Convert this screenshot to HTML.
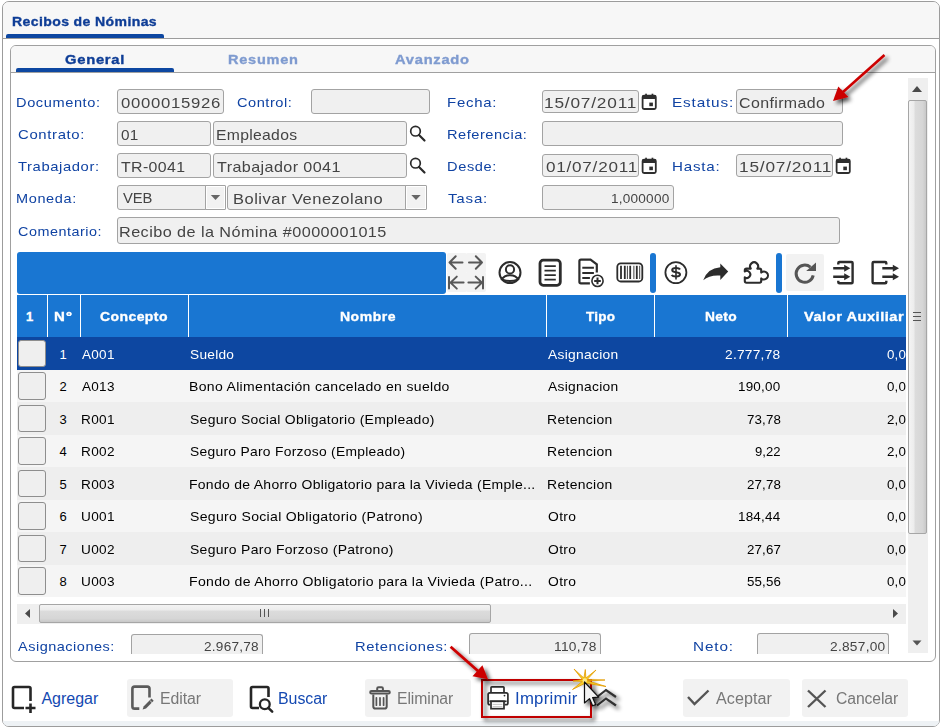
<!DOCTYPE html>
<html><head><meta charset="utf-8"><title>Recibos de Nóminas</title>
<style>
html,body{margin:0;padding:0;background:#fff;}
#root{position:relative;width:943px;height:727px;overflow:hidden;background:#fff;font-family:"Liberation Sans", sans-serif;}
.a{position:absolute;box-sizing:border-box;}
.t{position:absolute;white-space:nowrap;line-height:20px;transform-origin:0 0;font-family:"Liberation Sans", sans-serif;}
.inp{position:absolute;box-sizing:border-box;background:#f0f0f0;border:1px solid #a3a3a3;border-radius:3px;}
.row{position:absolute;left:17px;width:889px;}
.cb{position:absolute;left:18px;width:28px;box-sizing:border-box;background:#efefef;border:1px solid #8e8e8e;border-radius:3px;}
svg{position:absolute;overflow:visible;}
</style></head>
<body><div id="root">
<!-- outer window -->
<div class="a" style="left:2px;top:1px;width:938px;height:726px;border:1px solid #9c9c9c;border-radius:7px;background:#fff;"></div>
<div class="a" style="left:3px;top:2px;width:936px;height:36px;background:#f7f7f7;border-radius:6px 6px 0 0;"></div>
<div class="a" style="left:3px;top:38px;width:936px;height:1px;background:#9c9c9c;"></div>
<div class="a" style="left:6px;top:34px;width:158px;height:4px;background:#0d47a1;border-radius:2px 2px 0 0;"></div>
<div class="a" style="left:3px;top:721px;width:936px;height:5px;background:#eef2f5;border-radius:0 0 6px 6px;"></div>
<!-- inner panel -->
<div class="a" style="left:10px;top:45px;width:926px;height:617px;border:1px solid #a0a0a0;border-radius:6px;background:#fff;"></div>
<div class="a" style="left:11px;top:46px;width:924px;height:26px;background:#f7f7f7;border-radius:5px 5px 0 0;"></div>
<div class="a" style="left:11px;top:72px;width:924px;height:1px;background:#a0a0a0;"></div>
<div class="a" style="left:16px;top:68px;width:158px;height:4px;background:#0d47a1;border-radius:2px 2px 0 0;"></div>
<!-- vertical scrollbar -->
<div class="a" style="left:908px;top:78px;width:20px;height:575px;background:#efefef;"></div>
<div class="a" style="left:908px;top:100px;width:19px;height:434px;border:1px solid #a6a6a6;border-radius:2px;background:linear-gradient(to right,#f4f4f4 0%,#ececec 30%,#dcdcdc 35%,#d6d6d6 80%,#c8c8c8 100%);"></div>
<svg style="left:0;top:0" width="943" height="727">
 <polygon points="912,92 922,92 917,86" fill="#4a4a4a"/>
 <polygon points="912.5,640.5 921.5,640.5 917,645.5" fill="#555"/>
 <g stroke="#555" stroke-width="1"><line x1="913" y1="312.5" x2="921" y2="312.5"/><line x1="913" y1="316.5" x2="921" y2="316.5"/><line x1="913" y1="320.5" x2="921" y2="320.5"/></g>
</svg>
<!-- form inputs -->
<div class="inp" style="left:117px;top:89px;width:107px;height:25px;"></div>
<div class="inp" style="left:311px;top:89px;width:119px;height:25px;"></div>
<div class="inp" style="left:542px;top:90px;width:97px;height:23px;"></div>
<div class="inp" style="left:736px;top:89px;width:107px;height:25px;"></div>
<div class="inp" style="left:117px;top:121px;width:94px;height:25px;"></div>
<div class="inp" style="left:213px;top:121px;width:194px;height:25px;"></div>
<div class="inp" style="left:542px;top:121px;width:301px;height:25px;"></div>
<div class="inp" style="left:117px;top:153px;width:94px;height:25px;"></div>
<div class="inp" style="left:213px;top:153px;width:194px;height:25px;"></div>
<div class="inp" style="left:542px;top:154px;width:97px;height:23px;"></div>
<div class="inp" style="left:736px;top:154px;width:97px;height:23px;"></div>
<div class="inp" style="left:117px;top:185px;width:109px;height:25px;"></div>
<div class="inp" style="left:205px;top:185px;width:21px;height:25px;border-radius:1px;background:#f2f2f2;box-shadow:inset 0 0 0 1px #fff;"></div>
<div class="inp" style="left:227px;top:185px;width:200px;height:25px;"></div>
<div class="inp" style="left:405px;top:185px;width:22px;height:25px;border-radius:1px;background:#f2f2f2;box-shadow:inset 0 0 0 1px #fff;"></div>
<div class="inp" style="left:542px;top:185px;width:132px;height:25px;"></div>
<div class="inp" style="left:117px;top:217px;width:723px;height:27px;"></div>
<svg style="left:0;top:0" width="943" height="727">
 <polygon points="210.8,195 220.2,195 215.5,200" fill="#666"/>
 <polygon points="411.3,195 420.7,195 416,200" fill="#666"/>
 <g fill="none" stroke="#2a2a2a" stroke-width="1.7">
  <circle cx="415.5" cy="131.2" r="4.8"/><line x1="419" y1="135" x2="424.5" y2="140.5" stroke-width="2.2" stroke-linecap="round"/>
  <circle cx="415.5" cy="163.2" r="4.8"/><line x1="419" y1="167" x2="424.5" y2="172.5" stroke-width="2.2" stroke-linecap="round"/>
 </g>
 <g fill="#2e2e2e">
  <rect x="642.6" y="95.6" width="13.2" height="13.4" rx="1.5" fill="none" stroke="#2e2e2e" stroke-width="1.8"/>
  <rect x="642.6" y="95.6" width="13.2" height="3.4"/>
  <rect x="645.2" y="93.7" width="1.7" height="2.5"/><rect x="651.6" y="93.7" width="1.7" height="2.5"/>
  <rect x="649.3" y="102.6" width="3.6" height="3.6"/>
 </g>
 <g fill="#2e2e2e" transform="translate(0,64)">
  <rect x="642.6" y="95.6" width="13.2" height="13.4" rx="1.5" fill="none" stroke="#2e2e2e" stroke-width="1.8"/>
  <rect x="642.6" y="95.6" width="13.2" height="3.4"/>
  <rect x="645.2" y="93.7" width="1.7" height="2.5"/><rect x="651.6" y="93.7" width="1.7" height="2.5"/>
  <rect x="649.3" y="102.6" width="3.6" height="3.6"/>
 </g>
 <g fill="#2e2e2e" transform="translate(194,64)">
  <rect x="642.6" y="95.6" width="13.2" height="13.4" rx="1.5" fill="none" stroke="#2e2e2e" stroke-width="1.8"/>
  <rect x="642.6" y="95.6" width="13.2" height="3.4"/>
  <rect x="645.2" y="93.7" width="1.7" height="2.5"/><rect x="651.6" y="93.7" width="1.7" height="2.5"/>
  <rect x="649.3" y="102.6" width="3.6" height="3.6"/>
 </g>
</svg>
<!-- toolbar -->
<div class="a" style="left:17px;top:252px;width:429px;height:42px;background:#1976d2;border-radius:3px;"></div>
<div class="a" style="left:447px;top:253px;width:20px;height:20px;background:#f3f3f3;border-radius:2px;"></div>
<div class="a" style="left:466px;top:253px;width:20px;height:20px;background:#f3f3f3;border-radius:2px;"></div>
<div class="a" style="left:447px;top:272px;width:20px;height:20px;background:#f3f3f3;border-radius:2px;"></div>
<div class="a" style="left:466px;top:272px;width:20px;height:20px;background:#f3f3f3;border-radius:2px;"></div>
<div class="a" style="left:650px;top:253px;width:6px;height:40px;background:#1976d2;border-radius:3px;"></div>
<div class="a" style="left:776px;top:253px;width:6px;height:40px;background:#1976d2;border-radius:3px;"></div>
<div class="a" style="left:786px;top:254px;width:38px;height:37px;background:#f2f2f2;border-radius:2px;"></div>
<svg style="left:0;top:0" width="943" height="727">
 <g fill="none" stroke="#585858" stroke-width="2" stroke-linecap="round" stroke-linejoin="round">
  <path d="M449.5 262.5 H462.5 M455.7 256.3 L449.5 262.5 L455.7 268.7"/>
  <path d="M469 262.5 H482 M475.8 256.3 L482 262.5 L475.8 268.7"/>
  <path d="M449 277 V288.6 M450 282.6 H463.6 M456.8 276.6 L450.5 282.6 L456.8 288.6"/>
  <path d="M483 277 V288.6 M468.4 282.6 H482 M475.7 276.6 L482 282.6 L475.7 288.6"/>
 </g>
 <g fill="none" stroke="#2c2c2c" stroke-width="2">
  <circle cx="510" cy="272.6" r="10.5"/>
  <circle cx="510" cy="269.4" r="4.1"/>
  <path d="M501.3 280 Q504 275.2 510 275.2 Q516 275.2 518.7 280"/>
  <path d="M502.3 279.6 Q506 281 510 281 Q514 281 517.7 279.6"/>
 </g>
 <g fill="none" stroke="#2c2c2c">
  <rect x="540" y="260.2" width="20.3" height="25.1" rx="3.2" stroke-width="2.8"/>
  <path d="M544.5 266.1 H555.8 M544.5 270.6 H555.8 M544.5 275.1 H555.8 M544.5 279.6 H555.8" stroke-width="1.7"/>
 </g>
 <g fill="none" stroke="#2c2c2c" stroke-width="2.2">
  <path d="M589.9 283.4 H581 Q579.4 283.4 579.4 281.8 V261.2 Q579.4 259.6 581 259.6 H590.5 L596.8 264.4 V272.5"/>
  <path d="M582.3 267.7 H593.9 M582.3 272.9 H593.9 M582.3 278.1 H589.9" stroke-width="2"/>
  <circle cx="597.5" cy="280.9" r="5.6" stroke-width="1.6" fill="#fff"/>
  <path d="M594.2 280.9 H600.8 M597.5 277.6 V284.2" stroke-width="2"/>
 </g>
 <g fill="none" stroke="#2c2c2c">
  <rect x="617.3" y="263.3" width="25" height="18.2" rx="3.5" stroke-width="1.8"/>
  <path d="M621 265.8 V279 M624.8 265.8 V279 M630.2 265.8 V279 M636.8 265.8 V279" stroke-width="1.8"/>
  <path d="M627.4 265.8 V279 M639.7 265.8 V279" stroke-width="0.9"/>
  <path d="M633.8 265.8 V279" stroke="#888" stroke-width="1.6"/>
 </g>
 <g fill="none" stroke="#2c2c2c" stroke-width="1.8">
  <circle cx="675.9" cy="272.6" r="10.5"/>
  <path d="M680 269.5 Q679.2 267.9 676 267.9 Q672.2 267.9 672.2 270 Q672.2 271.9 676 272.2 Q680 272.6 680 274.6 Q680 276.6 676 276.6 Q672.6 276.6 671.6 275" stroke-width="2"/>
  <path d="M676 265.2 V279.6" stroke-width="1.6"/>
 </g>
 <path d="M703.2 280.3 Q707.5 268.2 720.3 267.3 V263.6 L728.2 271.5 L720.3 279.9 V275.6 Q709.5 274.8 703.2 280.3 Z" fill="#2c2c2c"/>
 <g fill="none" stroke="#2c2c2c" stroke-width="2.1" stroke-linejoin="round">
  <path d="M746.5 268.6 H750.8 A4 4 0 1 1 757.4 268.6 H759.5 Q761.2 268.6 761.2 270.3 V272.6 A4 4 0 1 1 761.2 278.4 V281 Q761.2 282.7 759.5 282.7 H746.5 Q744.8 282.7 744.8 281 V277.3 A3.5 3.5 0 1 0 744.8 271.5 V270.3 Q744.8 268.6 746.5 268.6 Z"/>
 </g>
 <path d="M810.4 267.2 A8.6 8.6 0 1 0 813.2 275.4" fill="none" stroke="#555" stroke-width="3"/>
 <polygon points="806.2,271 816,262.6 816,271" fill="#555"/>
 <g fill="none" stroke="#2c2c2c" stroke-width="2.4" stroke-linejoin="round">
  <path d="M838.3 264.5 V263 Q838.3 262 839.5 262 H851.5 Q852.6 262 852.6 263 V282.2 Q852.6 283.3 851.5 283.3 H839.5 Q838.3 283.3 838.3 282.2 V280.8"/>
  <path d="M833.2 268.3 H845.5 M833.2 276.8 H845.5"/>
 </g>
 <polygon points="844.2,264.8 850.3,268.3 844.2,271.8" fill="#2c2c2c"/>
 <polygon points="844.2,273.3 850.3,276.8 844.2,280.3" fill="#2c2c2c"/>
 <g fill="none" stroke="#2c2c2c" stroke-width="2.4" stroke-linejoin="round">
  <path d="M886.3 264.5 V263 Q886.3 262 885.2 262 H873.8 Q872.6 262 872.6 263 V282.2 Q872.6 283.3 873.8 283.3 H885.2 Q886.3 283.3 886.3 282.2 V280.8"/>
  <path d="M882.3 268.3 H893 M882.3 276.8 H893"/>
 </g>
 <polygon points="892.8,264.8 899,268.3 892.8,271.8" fill="#2c2c2c"/>
 <polygon points="892.8,273.3 899,276.8 892.8,280.3" fill="#2c2c2c"/>
</svg>
<!-- grid -->
<div class="a" style="left:17px;top:295px;width:889px;height:42px;background:#1976d2;"></div>
<div class="a" style="left:47px;top:295px;width:1px;height:42px;background:#fff;"></div>
<div class="a" style="left:80px;top:295px;width:1px;height:42px;background:#fff;"></div>
<div class="a" style="left:188px;top:295px;width:1px;height:42px;background:#fff;"></div>
<div class="a" style="left:546px;top:295px;width:1px;height:42px;background:#fff;"></div>
<div class="a" style="left:654px;top:295px;width:1px;height:42px;background:#fff;"></div>
<div class="a" style="left:787px;top:295px;width:1px;height:42px;background:#fff;"></div>
<div class="row" style="top:337px;height:33px;background:#0d47a1;"></div>
<div class="row" style="top:370px;height:32px;background:#f5f5f5;"></div>
<div class="row" style="top:402px;height:33px;background:#eeeeee;"></div>
<div class="row" style="top:435px;height:32px;background:#f5f5f5;"></div>
<div class="row" style="top:467px;height:33px;background:#eeeeee;"></div>
<div class="row" style="top:500px;height:32px;background:#f5f5f5;"></div>
<div class="row" style="top:532px;height:33px;background:#eeeeee;"></div>
<div class="row" style="top:565px;height:32px;background:#f5f5f5;"></div>
<div class="cb" style="top:340px;height:27px;"></div>
<div class="cb" style="top:372px;height:28px;"></div>
<div class="cb" style="top:405px;height:27px;"></div>
<div class="cb" style="top:437px;height:28px;"></div>
<div class="cb" style="top:470px;height:27px;"></div>
<div class="cb" style="top:502px;height:28px;"></div>
<div class="cb" style="top:535px;height:27px;"></div>
<div class="cb" style="top:567px;height:28px;"></div>
<!-- horizontal scrollbar -->
<div class="a" style="left:17px;top:604px;width:889px;height:20px;background:#efefef;"></div>
<div class="a" style="left:39px;top:604px;width:452px;height:19px;border:1px solid #a6a6a6;border-radius:2px;background:linear-gradient(to bottom,#f4f4f4 0%,#ececec 30%,#dcdcdc 35%,#d6d6d6 80%,#c8c8c8 100%);"></div>
<svg style="left:0;top:0" width="943" height="727">
 <polygon points="30,609 30,618 25,613.5" fill="#4a4a4a"/>
 <polygon points="893,609 893,618 898,613.5" fill="#4a4a4a"/>
 <g stroke="#555" stroke-width="1"><line x1="260.5" y1="609" x2="260.5" y2="617"/><line x1="264.5" y1="609" x2="264.5" y2="617"/><line x1="268.5" y1="609" x2="268.5" y2="617"/></g>
</svg>
<!-- totals -->
<div class="inp" style="left:131px;top:634px;width:132px;height:20px;border-bottom:none;border-radius:3px 3px 0 0;"></div>
<div class="inp" style="left:469px;top:633px;width:132px;height:21px;border-bottom:none;border-radius:3px 3px 0 0;"></div>
<div class="inp" style="left:757px;top:633px;width:132px;height:21px;border-bottom:none;border-radius:3px 3px 0 0;"></div>
<!-- bottom buttons -->
<div class="a" style="left:127px;top:679px;width:106px;height:38px;background:#f2f2f2;border-radius:3px;"></div>
<div class="a" style="left:365px;top:679px;width:106px;height:38px;background:#f2f2f2;border-radius:3px;"></div>
<div class="a" style="left:683px;top:679px;width:107px;height:38px;background:#f2f2f2;border-radius:3px;"></div>
<div class="a" style="left:802px;top:679px;width:106px;height:38px;background:#f2f2f2;border-radius:3px;"></div>
<svg style="left:0;top:0" width="943" height="727">
 <g fill="none" stroke="#262626" stroke-width="2.6">
  <path d="M24 708 H14.5 Q13 708 13 706.5 V688.5 Q13 687 14.5 687 H29 Q30.5 687 30.5 688.5 V701"/>
  <path d="M30.5 703.5 V713 M25.5 708 H35.5"/>
 </g>
 <g fill="none" stroke="#555" stroke-width="2.6">
  <path d="M139.3 708.6 H134.6 Q132.4 708.6 132.4 706.4 V688.8 Q132.4 686.6 134.6 686.6 H147.3 Q149.5 686.6 149.5 688.8 V697.5" stroke="#5a5a5a"/>
 </g>
 <polygon points="142.6,709.6 143.8,706.3 151.5,698.6 153.7,700.8 146,708.5" fill="#5a5a5a"/>
 <path d="M150.2 700.8 L152.5 703.1" stroke="#f2f2f2" stroke-width="0.9"/>
 <g>
 </g>
 <g fill="none" stroke="#262626" stroke-width="2.6">
  <path d="M259 708 H252.5 Q251 708 251 706.5 V688.5 Q251 687 252.5 687 H267 Q268.5 687 268.5 688.5 V697"/>
  <circle cx="264.8" cy="704.3" r="4.9" stroke-width="2.3"/>
  <path d="M268.3 707.8 L272.2 711.7" stroke-width="2.5" stroke-linecap="round"/>
 </g>
 <g fill="none" stroke="#555" stroke-width="2">
  <rect x="370.2" y="690.9" width="19.6" height="2.6" rx="1.3"/>
  <path d="M377.2 690.4 V688.6 Q377.2 687.3 378.5 687.3 H381.6 Q382.9 687.3 382.9 688.6 V690.4"/>
  <path d="M373.3 694.5 V706.5 Q373.3 708.6 375.4 708.6 H384.6 Q386.7 708.6 386.7 706.5 V694.5"/>
  <path d="M376.4 697.8 V705.2 M380 697.8 V705.2 M383.6 697.8 V705.2" stroke-width="1.7" stroke-linecap="round"/>
 </g>
 <g fill="none" stroke="#2c2c2c" stroke-width="1.7">
  <path d="M491 692.3 V687.6 Q491 686.8 491.8 686.8 H503.2 Q504 686.8 504 687.6 V692.3"/>
  <path d="M490.2 704.6 H489.8 Q488.1 704.6 488.1 702.9 V694.5 Q488.1 692.8 489.8 692.8 H506.2 Q507.9 692.8 507.9 694.5 V702.9 Q507.9 704.6 506.2 704.6 H504.8"/>
  <path d="M489.4 701.3 H506.6"/>
  <rect x="491" y="701.3" width="13" height="7.4" fill="#fff"/>
  <path d="M492.6 704.4 H502.4 M492.6 706.6 H502.4" stroke="#bdbdbd" stroke-width="0.9"/>
 </g>
 <circle cx="504.5" cy="695.6" r="0.9" fill="#2c2c2c"/>
 <g fill="none" stroke="#555" stroke-width="2.4">
  <path d="M688 697 L694.5 704 L708.5 690.5"/>
  <path d="M808 690.5 L825.5 707 M825.5 690.5 L808 707"/>
 </g>
</svg>
<div class="t" style="left:12.30px;top:12px;font-size:13px;color:#0e3d96;font-weight:bold;-webkit-text-stroke:0.35px #0e3d96;letter-spacing:0.366px;transform:scaleX(1.0788);">Recibos de Nóminas</div>
<div class="t" style="left:65.30px;top:50px;font-size:13px;color:#0e3d96;font-weight:bold;-webkit-text-stroke:0.35px #0e3d96;letter-spacing:0.639px;transform:scaleX(1.1368);">General</div>
<div class="t" style="left:228.00px;top:50px;font-size:13px;color:#7f9bd0;font-weight:bold;-webkit-text-stroke:0.35px #7f9bd0;letter-spacing:0.682px;transform:scaleX(1.1170);">Resumen</div>
<div class="t" style="left:394.70px;top:50px;font-size:13px;color:#7f9bd0;font-weight:bold;-webkit-text-stroke:0.35px #7f9bd0;letter-spacing:0.664px;transform:scaleX(1.1291);">Avanzado</div>
<div class="t" style="left:16.38px;top:93px;font-size:13px;color:#1043a3;letter-spacing:0.544px;transform:scaleX(1.1202);">Documento:</div>
<div class="t" style="left:236.60px;top:93px;font-size:13px;color:#1043a3;letter-spacing:0.468px;transform:scaleX(1.1228);">Control:</div>
<div class="t" style="left:447.25px;top:93px;font-size:13px;color:#1043a3;letter-spacing:0.659px;transform:scaleX(1.1490);">Fecha:</div>
<div class="t" style="left:672.02px;top:93px;font-size:13px;color:#1043a3;letter-spacing:0.700px;transform:scaleX(1.1800);">Estatus:</div>
<div class="t" style="left:17.50px;top:125px;font-size:13px;color:#1043a3;letter-spacing:0.560px;transform:scaleX(1.1457);">Contrato:</div>
<div class="t" style="left:447.28px;top:125px;font-size:13px;color:#1043a3;letter-spacing:0.472px;transform:scaleX(1.1224);">Referencia:</div>
<div class="t" style="left:17.50px;top:157px;font-size:13px;color:#1043a3;letter-spacing:0.525px;transform:scaleX(1.1369);">Trabajador:</div>
<div class="t" style="left:447.28px;top:157px;font-size:13px;color:#1043a3;letter-spacing:0.572px;transform:scaleX(1.1216);">Desde:</div>
<div class="t" style="left:672.04px;top:157px;font-size:13px;color:#1043a3;letter-spacing:0.676px;transform:scaleX(1.1642);">Hasta:</div>
<div class="t" style="left:16.38px;top:189px;font-size:13px;color:#1043a3;letter-spacing:0.563px;transform:scaleX(1.1154);">Moneda:</div>
<div class="t" style="left:448.40px;top:189px;font-size:13px;color:#1043a3;letter-spacing:0.702px;transform:scaleX(1.1603);">Tasa:</div>
<div class="t" style="left:18.00px;top:222px;font-size:13px;color:#1043a3;letter-spacing:0.452px;transform:scaleX(1.1069);">Comentario:</div>
<div class="t" style="left:120.70px;top:93px;font-size:15px;color:#444444;letter-spacing:0.635px;transform:scaleX(1.1150);">0000015926</div>
<div class="t" style="left:121.10px;top:125px;font-size:15px;color:#444444;letter-spacing:0.219px;transform:scaleX(1.0205);">01</div>
<div class="t" style="left:215.55px;top:125px;font-size:15px;color:#444444;letter-spacing:0.284px;transform:scaleX(1.0486);">Empleados</div>
<div class="t" style="left:121.10px;top:157px;font-size:15px;color:#444444;letter-spacing:0.358px;transform:scaleX(1.0588);">TR-0041</div>
<div class="t" style="left:216.60px;top:157px;font-size:15px;color:#444444;letter-spacing:0.370px;transform:scaleX(1.0765);">Trabajador 0041</div>
<div class="t" style="left:123.40px;top:188px;font-size:15px;color:#444444;letter-spacing:-0.144px;transform:scaleX(0.9858);">VEB</div>
<div class="t" style="left:232.70px;top:189px;font-size:15px;color:#444444;letter-spacing:0.452px;transform:scaleX(1.0997);">Bolivar Venezolano</div>
<div class="t" style="left:118.72px;top:222px;font-size:15px;color:#444444;letter-spacing:0.395px;transform:scaleX(1.0823);">Recibo de la Nómina #0000001015</div>
<div class="t" style="left:544.45px;top:93px;font-size:15px;color:#444444;letter-spacing:0.703px;transform:scaleX(1.1502);">15/07/2011</div>
<div class="t" style="left:739.40px;top:93px;font-size:15px;color:#444444;letter-spacing:0.347px;transform:scaleX(1.0646);">Confirmado</div>
<div class="t" style="left:545.60px;top:157px;font-size:15px;color:#444444;letter-spacing:0.670px;transform:scaleX(1.1400);">01/07/2011</div>
<div class="t" style="left:739.05px;top:157px;font-size:15px;color:#444444;letter-spacing:0.703px;transform:scaleX(1.1502);">15/07/2011</div>
<div class="t" style="left:611.00px;top:189px;font-size:13px;color:#444444;letter-spacing:0.219px;transform:scaleX(1.0445);">1,000000</div>
<div class="t" style="left:26.00px;top:307px;font-size:13px;color:#ffffff;font-weight:bold;-webkit-text-stroke:0.35px #ffffff;">1</div>
<div class="t" style="left:54.20px;top:307px;font-size:13px;color:#ffffff;font-weight:bold;-webkit-text-stroke:0.35px #ffffff;letter-spacing:1.286px;transform:scaleX(1.1548);">Nº</div>
<div class="t" style="left:99.80px;top:307px;font-size:13px;color:#ffffff;font-weight:bold;-webkit-text-stroke:0.35px #ffffff;letter-spacing:0.399px;transform:scaleX(1.0750);">Concepto</div>
<div class="t" style="left:339.50px;top:307px;font-size:13px;color:#ffffff;font-weight:bold;-webkit-text-stroke:0.35px #ffffff;letter-spacing:0.469px;transform:scaleX(1.0775);">Nombre</div>
<div class="t" style="left:585.60px;top:307px;font-size:13px;color:#ffffff;font-weight:bold;-webkit-text-stroke:0.35px #ffffff;letter-spacing:0.236px;transform:scaleX(1.0405);">Tipo</div>
<div class="t" style="left:705.00px;top:307px;font-size:13px;color:#ffffff;font-weight:bold;-webkit-text-stroke:0.35px #ffffff;letter-spacing:0.359px;transform:scaleX(1.0591);">Neto</div>
<div class="t" style="left:803.60px;top:307px;font-size:13px;color:#ffffff;font-weight:bold;-webkit-text-stroke:0.35px #ffffff;letter-spacing:0.468px;transform:scaleX(1.1233);">Valor Auxiliar</div>
<div class="t" style="left:59.50px;top:345px;font-size:13px;color:#ffffff;">1</div>
<div class="t" style="left:82.00px;top:345px;font-size:13px;color:#ffffff;letter-spacing:0.265px;transform:scaleX(1.0412);">A001</div>
<div class="t" style="left:190.00px;top:345px;font-size:13px;color:#ffffff;letter-spacing:0.263px;transform:scaleX(1.0514);">Sueldo</div>
<div class="t" style="left:548.00px;top:345px;font-size:13px;color:#ffffff;letter-spacing:0.273px;transform:scaleX(1.0619);">Asignacion</div>
<div class="t" style="left:725.42px;top:345px;font-size:13px;color:#ffffff;letter-spacing:0.244px;transform:scaleX(1.0537);">2.777,78</div>
<div class="t" style="left:886.70px;top:345px;font-size:13px;color:#ffffff;letter-spacing:0.148px;transform:scaleX(1.0255);">0,0</div>
<div class="t" style="left:59.50px;top:377px;font-size:13px;color:#000000;">2</div>
<div class="t" style="left:82.00px;top:377px;font-size:13px;color:#000000;letter-spacing:0.265px;transform:scaleX(1.0412);">A013</div>
<div class="t" style="left:188.92px;top:377px;font-size:13px;color:#000000;letter-spacing:0.307px;transform:scaleX(1.0776);">Bono Alimentación cancelado en sueldo</div>
<div class="t" style="left:548.00px;top:377px;font-size:13px;color:#000000;letter-spacing:0.273px;transform:scaleX(1.0619);">Asignacion</div>
<div class="t" style="left:738.42px;top:377px;font-size:13px;color:#000000;letter-spacing:0.181px;transform:scaleX(1.0356);">190,00</div>
<div class="t" style="left:886.70px;top:377px;font-size:13px;color:#000000;letter-spacing:0.148px;transform:scaleX(1.0255);">0,0</div>
<div class="t" style="left:59.50px;top:410px;font-size:13px;color:#000000;">3</div>
<div class="t" style="left:80.95px;top:410px;font-size:13px;color:#000000;letter-spacing:0.299px;transform:scaleX(1.0473);">R001</div>
<div class="t" style="left:190.00px;top:410px;font-size:13px;color:#000000;letter-spacing:0.278px;transform:scaleX(1.0719);">Seguro Social Obligatorio (Empleado)</div>
<div class="t" style="left:546.93px;top:410px;font-size:13px;color:#000000;letter-spacing:0.313px;transform:scaleX(1.0701);">Retencion</div>
<div class="t" style="left:746.69px;top:410px;font-size:13px;color:#000000;letter-spacing:0.128px;transform:scaleX(1.0243);">73,78</div>
<div class="t" style="left:886.70px;top:410px;font-size:13px;color:#000000;letter-spacing:0.148px;transform:scaleX(1.0255);">2,0</div>
<div class="t" style="left:59.50px;top:442px;font-size:13px;color:#000000;">4</div>
<div class="t" style="left:80.95px;top:442px;font-size:13px;color:#000000;letter-spacing:0.299px;transform:scaleX(1.0473);">R002</div>
<div class="t" style="left:190.00px;top:442px;font-size:13px;color:#000000;letter-spacing:0.268px;transform:scaleX(1.0639);">Seguro Paro Forzoso (Empleado)</div>
<div class="t" style="left:546.93px;top:442px;font-size:13px;color:#000000;letter-spacing:0.313px;transform:scaleX(1.0701);">Retencion</div>
<div class="t" style="left:754.96px;top:442px;font-size:13px;color:#000000;letter-spacing:0.036px;transform:scaleX(1.0064);">9,22</div>
<div class="t" style="left:886.70px;top:442px;font-size:13px;color:#000000;letter-spacing:0.148px;transform:scaleX(1.0255);">2,0</div>
<div class="t" style="left:59.50px;top:475px;font-size:13px;color:#000000;">5</div>
<div class="t" style="left:80.95px;top:475px;font-size:13px;color:#000000;letter-spacing:0.299px;transform:scaleX(1.0473);">R003</div>
<div class="t" style="left:188.93px;top:475px;font-size:13px;color:#000000;letter-spacing:0.271px;transform:scaleX(1.0739);">Fondo de Ahorro Obligatorio para la Vivieda (Emple...</div>
<div class="t" style="left:546.93px;top:475px;font-size:13px;color:#000000;letter-spacing:0.313px;transform:scaleX(1.0701);">Retencion</div>
<div class="t" style="left:746.69px;top:475px;font-size:13px;color:#000000;letter-spacing:0.128px;transform:scaleX(1.0243);">27,78</div>
<div class="t" style="left:886.70px;top:475px;font-size:13px;color:#000000;letter-spacing:0.148px;transform:scaleX(1.0255);">0,0</div>
<div class="t" style="left:59.50px;top:507px;font-size:13px;color:#000000;">6</div>
<div class="t" style="left:80.95px;top:507px;font-size:13px;color:#000000;letter-spacing:0.299px;transform:scaleX(1.0473);">U001</div>
<div class="t" style="left:190.00px;top:507px;font-size:13px;color:#000000;letter-spacing:0.299px;transform:scaleX(1.0803);">Seguro Social Obligatorio (Patrono)</div>
<div class="t" style="left:548.00px;top:507px;font-size:13px;color:#000000;letter-spacing:0.344px;transform:scaleX(1.0658);">Otro</div>
<div class="t" style="left:738.42px;top:507px;font-size:13px;color:#000000;letter-spacing:0.181px;transform:scaleX(1.0356);">184,44</div>
<div class="t" style="left:886.70px;top:507px;font-size:13px;color:#000000;letter-spacing:0.148px;transform:scaleX(1.0255);">0,0</div>
<div class="t" style="left:59.50px;top:540px;font-size:13px;color:#000000;">7</div>
<div class="t" style="left:80.95px;top:540px;font-size:13px;color:#000000;letter-spacing:0.299px;transform:scaleX(1.0473);">U002</div>
<div class="t" style="left:190.00px;top:540px;font-size:13px;color:#000000;letter-spacing:0.292px;transform:scaleX(1.0728);">Seguro Paro Forzoso (Patrono)</div>
<div class="t" style="left:548.00px;top:540px;font-size:13px;color:#000000;letter-spacing:0.344px;transform:scaleX(1.0658);">Otro</div>
<div class="t" style="left:746.69px;top:540px;font-size:13px;color:#000000;letter-spacing:0.128px;transform:scaleX(1.0243);">27,67</div>
<div class="t" style="left:886.70px;top:540px;font-size:13px;color:#000000;letter-spacing:0.148px;transform:scaleX(1.0255);">0,0</div>
<div class="t" style="left:59.50px;top:572px;font-size:13px;color:#000000;">8</div>
<div class="t" style="left:80.95px;top:572px;font-size:13px;color:#000000;letter-spacing:0.299px;transform:scaleX(1.0473);">U003</div>
<div class="t" style="left:188.92px;top:572px;font-size:13px;color:#000000;letter-spacing:0.289px;transform:scaleX(1.0806);">Fondo de Ahorro Obligatorio para la Vivieda (Patro...</div>
<div class="t" style="left:548.00px;top:572px;font-size:13px;color:#000000;letter-spacing:0.344px;transform:scaleX(1.0658);">Otro</div>
<div class="t" style="left:746.69px;top:572px;font-size:13px;color:#000000;letter-spacing:0.128px;transform:scaleX(1.0243);">55,56</div>
<div class="t" style="left:886.70px;top:572px;font-size:13px;color:#000000;letter-spacing:0.148px;transform:scaleX(1.0255);">0,0</div>
<div class="t" style="left:18.30px;top:637px;font-size:13px;color:#1043a3;letter-spacing:0.457px;transform:scaleX(1.1141);">Asignaciones:</div>
<div class="t" style="left:203.60px;top:637px;font-size:13px;color:#444444;letter-spacing:0.220px;transform:scaleX(1.0480);">2.967,78</div>
<div class="t" style="left:355.17px;top:637px;font-size:13px;color:#1043a3;letter-spacing:0.525px;transform:scaleX(1.1319);">Retenciones:</div>
<div class="t" style="left:553.80px;top:637px;font-size:13px;color:#444444;letter-spacing:0.275px;transform:scaleX(1.0565);">110,78</div>
<div class="t" style="left:692.92px;top:637px;font-size:13px;color:#1043a3;letter-spacing:0.735px;transform:scaleX(1.1760);">Neto:</div>
<div class="t" style="left:829.80px;top:637px;font-size:13px;color:#444444;letter-spacing:0.251px;transform:scaleX(1.0551);">2.857,00</div>
<div class="t" style="left:41.40px;top:689px;font-size:16px;color:#1449b2;">Agregar</div>
<div class="t" style="left:159.71px;top:689px;font-size:16px;color:#777777;letter-spacing:-0.062px;transform:scaleX(0.9889);">Editar</div>
<div class="t" style="left:277.70px;top:689px;font-size:16px;color:#1449b2;letter-spacing:-0.030px;transform:scaleX(0.9955);">Buscar</div>
<div class="t" style="left:396.82px;top:689px;font-size:16px;color:#777777;letter-spacing:-0.091px;transform:scaleX(0.9837);">Eliminar</div>
<div class="t" style="left:514.75px;top:689px;font-size:16px;color:#1449b2;letter-spacing:0.244px;transform:scaleX(1.0466);">Imprimir</div>
<div class="t" style="left:716.40px;top:689px;font-size:16px;color:#777777;letter-spacing:0.045px;transform:scaleX(1.0074);">Aceptar</div>
<div class="t" style="left:835.70px;top:689px;font-size:16px;color:#777777;letter-spacing:-0.111px;transform:scaleX(0.9824);">Cancelar</div>
<!-- annotations -->
<svg style="left:0;top:0" width="943" height="727">
 <defs>
  <filter id="sh" x="-50%" y="-50%" width="200%" height="200%"><feGaussianBlur in="SourceAlpha" stdDeviation="2.3"/><feOffset dx="3" dy="3"/><feComponentTransfer><feFuncA type="linear" slope="0.7"/></feComponentTransfer><feMerge><feMergeNode/><feMergeNode in="SourceGraphic"/></feMerge></filter>
 </defs>
 <g filter="url(#sh)">
  <rect x="482" y="680" width="109" height="37" fill="none" stroke="#c00000" stroke-width="2"/>
 </g>
 <g filter="url(#sh)">
  <line x1="884.5" y1="55" x2="843" y2="92" stroke="#cc0000" stroke-width="2.6"/>
  <polygon points="833,101 838.3,86.4 848.4,97" fill="#cc0000"/>
 </g>
 <g filter="url(#sh)">
  <line x1="450.6" y1="646.7" x2="478" y2="671" stroke="#cc0000" stroke-width="2.8"/>
  <polygon points="488,679.3 482.4,665.3 472.5,676.2" fill="#cc0000"/>
 </g>
 <g filter="url(#sh)">
  <path d="M597 697 L606 690 L616 697 M597 705.5 L606 698.5 L616 705.5" fill="none" stroke="#303030" stroke-width="2.2"/>
 </g>
 <g>
  <polygon points="574.0,669.0 583.9,678.1 585.3,669.5 585.9,678.1 596.0,670.0 587.2,679.5 605.0,680.0 587.4,680.8 606.0,686.5 585.3,683.1 572.5,689.5 582.3,681.4 573.0,681.0 582.4,679.5" fill="#f7cf2a" stroke="#e39a00" stroke-width="0.8" stroke-linejoin="round"/>
  <circle cx="584.8" cy="680.5" r="2.2" fill="#fbe98a"/>
 </g>
 <g filter="url(#sh)">
  <path d="M584.5 682 V703 L589.5 698.6 L592.6 705.8 L595.6 704.6 L592.6 697.6 L598.6 697.2 Z" fill="#f2f2f2" stroke="#111" stroke-width="1.2" stroke-linejoin="round"/>
 </g>
</svg>
</div></body></html>
